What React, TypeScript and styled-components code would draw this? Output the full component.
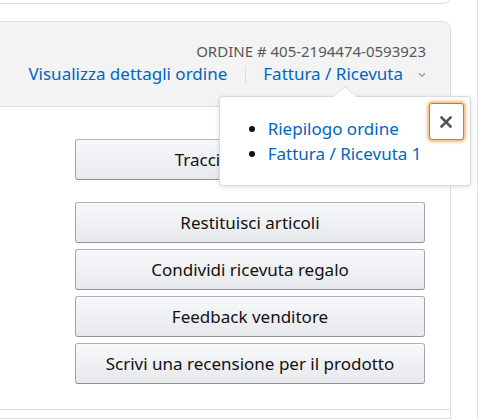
import React from "react";
import styled, { createGlobalStyle } from "styled-components";

const GlobalStyle = createGlobalStyle`
  html, body {
    margin: 0;
    padding: 0;
    background: #fff;
    overflow: hidden;
  }
  body {
    font-family: "Noto Sans", "Open Sans", Arial, sans-serif;
    color: #111;
  }
`;

const Page = styled.div`
  display: flex;
  width: 487px;
  height: 419px;
  overflow: hidden;
`;

const MainColumn = styled.div`
  width: 478px;
  flex: none;
  border-right: 1px solid #e3e3e3;
  box-sizing: border-box;
  padding-right: 26px;
  display: flex;
  flex-direction: column;
  gap: 17px;
`;

const Card = styled.div`
  margin-left: -10px;
  border: 1px solid #ddd;
  border-radius: 8px;
  background: #fff;
  position: relative;
`;

const PrevCard = styled(Card)`
  margin-top: -26px;
  height: 30px;
  box-sizing: border-box;
`;

const OrderCard = styled(Card)`
  flex: 1;
  border-bottom-left-radius: 0;
  border-bottom-right-radius: 0;
`;

const CardHeader = styled.div`
  background: #f3f3f3;
  border-bottom: 1px solid #ddd;
  border-radius: 8px 8px 0 0;
  height: 85px;
  box-sizing: border-box;
  padding: 20px 24px 0 0;
  display: flex;
  flex-direction: column;
  align-items: flex-end;
`;

const OrderId = styled.div`
  font-size: 15px;
  line-height: 19px;
  color: #565959;
`;

const LinkRow = styled.div`
  display: flex;
  align-items: center;
  margin-top: 1px;
  height: 24px;
`;

const Link = styled.a`
  font-size: 17px;
  line-height: 24px;
  color: #0066c0;
  text-decoration: none;
  cursor: pointer;
`;

const Separator = styled.span`
  width: 1px;
  height: 17px;
  background: #ddd;
  margin: 0 17px 0 18px;
`;

const Trigger = styled.span`
  position: relative;
  display: flex;
  align-items: center;
  gap: 15px;
`;

const Chevron = styled.svg`
  width: 8px;
  height: 6px;
  margin-top: 1px;
`;

const Popover = styled.div`
  position: absolute;
  top: calc(100% + 10px);
  left: 50%;
  transform: translateX(-50%);
  width: 252px;
  height: 90px;
  box-sizing: border-box;
  background: #fff;
  border: 1px solid #dadada;
  border-radius: 4px;
  box-shadow: 0 1px 5px rgba(0, 0, 0, 0.13);
  z-index: 5;

  &::before,
  &::after {
    content: "";
    position: absolute;
    left: 50%;
    transform: translateX(-50%);
    width: 0;
    height: 0;
    border-left: 11px solid transparent;
    border-right: 11px solid transparent;
  }
  &::before {
    top: -11px;
    border-bottom: 11px solid #d0d0d0;
  }
  &::after {
    top: -10px;
    border-bottom: 10px solid #fff;
  }
`;

const PopoverList = styled.ul`
  margin: 0;
  padding: 19px 0 0 48px;
  list-style: disc;
`;

const PopoverItem = styled.li`
  font-size: 17px;
  line-height: 25px;
  color: #111;
`;

const PopoverLink = styled.a`
  color: #0066c0;
  text-decoration: none;
`;

const CloseButton = styled.button`
  position: absolute;
  top: 6px;
  right: 6px;
  width: 35px;
  height: 37px;
  padding: 0;
  background: #fff;
  border: 1px solid #e77600;
  border-radius: 3px;
  box-shadow: 0 0 3px 2px rgba(228, 121, 17, 0.5);
  display: flex;
  align-items: center;
  justify-content: center;
  cursor: pointer;
`;

const CardBody = styled.div`
  padding: 32px 25px 0 84px;
  display: flex;
  flex-direction: column;
`;

const ButtonGroup = styled.div<{ $spaced?: boolean }>`
  display: flex;
  flex-direction: column;
  gap: 6px;
  margin-bottom: ${(p) => (p.$spaced ? "22px" : "0")};
`;

const ActionButton = styled.button`
  height: 41px;
  width: 100%;
  box-sizing: border-box;
  border: 1px solid;
  border-color: #adb1b8 #a2a6ac #8d9096;
  border-radius: 3px;
  background: linear-gradient(to bottom, #f7f8fa, #e7e9ec);
  box-shadow: 0 1px 0 rgba(255, 255, 255, 0.6) inset;
  font-family: inherit;
  font-size: 17px;
  color: #111;
  cursor: pointer;
  padding: 0 10px;
`;

const Divider = styled.div`
  height: 1px;
  background: #ddd;
  margin: 25px -25px 0 -84px;
`;

export default function App() {
  return (
    <>
      <GlobalStyle />
      <Page>
        <MainColumn>
          <PrevCard />
          <OrderCard>
            <CardHeader>
              <OrderId>ORDINE # 405-2194474-0593923</OrderId>
              <LinkRow>
                <Link>Visualizza dettagli ordine</Link>
                <Separator />
                <Trigger>
                  <Link>Fattura / Ricevuta</Link>
                  <Chevron viewBox="0 0 8 6">
                    <path d="M1 1.2 L4 4.2 L7 1.2" fill="none" stroke="#a0a0a0" strokeWidth="1.4" />
                  </Chevron>
                  <Popover>
                    <PopoverList>
                      <PopoverItem>
                        <PopoverLink>Riepilogo ordine</PopoverLink>
                      </PopoverItem>
                      <PopoverItem>
                        <PopoverLink>Fattura / Ricevuta 1</PopoverLink>
                      </PopoverItem>
                    </PopoverList>
                    <CloseButton aria-label="Chiudi">
                      <svg width="12" height="12" viewBox="0 0 12 12">
                        <path d="M1.5 1.5 L10.5 10.5 M10.5 1.5 L1.5 10.5" stroke="#555" strokeWidth="2.6" strokeLinecap="square" />
                      </svg>
                    </CloseButton>
                  </Popover>
                </Trigger>
              </LinkRow>
            </CardHeader>
            <CardBody>
              <ButtonGroup $spaced>
                <ActionButton>Traccia il tuo pacco</ActionButton>
              </ButtonGroup>
              <ButtonGroup>
                <ActionButton>Restituisci articoli</ActionButton>
                <ActionButton>Condividi ricevuta regalo</ActionButton>
                <ActionButton>Feedback venditore</ActionButton>
                <ActionButton>Scrivi una recensione per il prodotto</ActionButton>
              </ButtonGroup>
              <Divider />
            </CardBody>
          </OrderCard>
        </MainColumn>
      </Page>
    </>
  );
}
